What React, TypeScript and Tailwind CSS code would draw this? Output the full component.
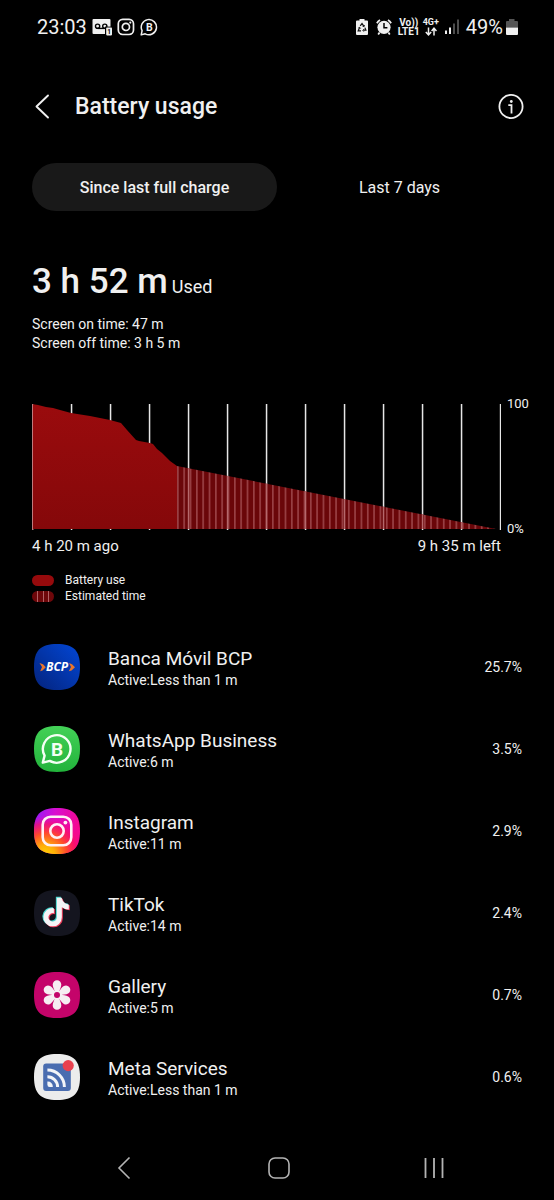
import type { ReactNode } from "react";
import { FaTiktok } from "react-icons/fa";

interface AppUsage {
  name: string;
  active: string;
  percent: string;
  icon: ReactNode;
}

const SQUIRCLE = "M24 1C40.500 1 47 7.500 47 24C47 40.500 40.500 47 24 47C7.500 47 1 40.500 1 24C1 7.500 7.500 1 24 1Z";

// Battery level over time, in chart units (469 x 126)
const USED_AREA =
  "M0 0L6 1L14 3L21 4L28 6L39 9L58 12L78 16L89 19L95 26L104 36L107 37L118 39L121 40L125 45L130 49L138 57L145 62V125H0Z";
const ESTIMATED_AREA = "M145 62L464 125H145Z";

const BcpIcon = () => (
  <svg viewBox="0 0 48 48" className="size-12 shrink-0" aria-hidden="true">
    <defs>
      <linearGradient id="bcp" x1="1" y1="0" x2="0" y2="1">
        <stop offset="0" stopColor="#0247d6" />
        <stop offset="1" stopColor="#04237c" />
      </linearGradient>
    </defs>
    <path d={SQUIRCLE} fill="url(#bcp)" />
    <path d="M6.500 20L10 21.200L12.800 24.200L9.500 27.500L7.200 28.200L9 24Z" fill="#e8762c" />
    <path d="M36 20L39 21.200L42 24.200L38.500 27.500L35.800 28.200L38 24Z" fill="#e8762c" />
    <text x="24" y="28" fontSize="12" fontWeight="700" fontStyle="italic" textAnchor="middle" fill="#fff" fontFamily="'Open Sans', sans-serif">
      BCP
    </text>
  </svg>
);

const WhatsAppIcon = () => (
  <svg viewBox="0 0 48 48" className="size-12 shrink-0" aria-hidden="true">
    <defs>
      <linearGradient id="wa" x1="0" y1="0" x2="0" y2="1">
        <stop offset="0" stopColor="#43d157" />
        <stop offset="1" stopColor="#22b33b" />
      </linearGradient>
    </defs>
    <path d={SQUIRCLE} fill="url(#wa)" />
    <path d="M11.600 30.600A13.800 13.800 0 1 1 16.800 35.900L9.800 37.600Z" fill="none" stroke="#f4fff4" strokeWidth="2.4" strokeLinejoin="round" />
    <text x="24" y="30.6" fontSize="19" fontWeight="700" textAnchor="middle" fill="#f4fff4" fontFamily="Roboto, sans-serif">
      B
    </text>
  </svg>
);

const InstagramIcon = () => (
  <svg viewBox="0 0 48 48" className="size-12 shrink-0" aria-hidden="true">
    <defs>
      <linearGradient id="ig-base" x1="0" y1="0" x2="1" y2="0.3">
        <stop offset="0" stopColor="#8a1cff" />
        <stop offset="0.45" stopColor="#d80fd0" />
        <stop offset="1" stopColor="#f5078f" />
      </linearGradient>
      <radialGradient id="ig-warm" cx="0.25" cy="1.02" r="0.85">
        <stop offset="0" stopColor="#ffd500" />
        <stop offset="0.25" stopColor="#ffae08" />
        <stop offset="0.55" stopColor="#ff4a2c" />
        <stop offset="0.8" stopColor="#fb1060" stopOpacity="0.7" />
        <stop offset="1" stopColor="#f5078f" stopOpacity="0" />
      </radialGradient>
    </defs>
    <path d={SQUIRCLE} fill="url(#ig-base)" />
    <path d={SQUIRCLE} fill="url(#ig-warm)" />
    <rect x="9.7" y="9.7" width="28.6" height="28.6" rx="8" fill="none" stroke="#fff0f4" strokeWidth="2.6" />
    <circle cx="24" cy="24" r="6.7" fill="none" stroke="#fff0f4" strokeWidth="2.6" />
    <circle cx="32.4" cy="15.6" r="1.9" fill="#fff0f4" />
  </svg>
);

const TikTokIcon = () => (
  <svg viewBox="0 0 48 48" className="size-12 shrink-0" aria-hidden="true">
    <path d={SQUIRCLE} fill="#14151f" />
    <FaTiktok x={7.6} y={7.6} size={29} color="#45d6cf" />
    <FaTiktok x={9.6} y={9.4} size={29} color="#ee3f5c" />
    <FaTiktok x={8.6} y={8.5} size={29} color="#f4f4f6" />
  </svg>
);

const GalleryIcon = () => (
  <svg viewBox="0 0 48 48" className="size-12 shrink-0" aria-hidden="true">
    <path d={SQUIRCLE} fill="#c4046a" />
    {[0, 60, 120, 180, 240, 300].map((angle) => (
      <path
        key={angle}
        d="M22 21C21.200 18.500 19.700 16 19.700 13.600A4.300 4.300 0 0 1 28.300 13.600C28.300 16 26.800 18.500 26 21Z"
        fill="#f6eef2"
        transform={`rotate(${angle} 24 24)`}
      />
    ))}
    <circle cx="24" cy="24" r="4.8" fill="#f6eef2" />
    <circle cx="24" cy="24" r="3" fill="#c4046a" />
  </svg>
);

const MetaIcon = () => (
  <svg viewBox="0 0 48 48" className="size-12 shrink-0" aria-hidden="true">
    <path d={SQUIRCLE} fill="#ececec" />
    <rect x="10.2" y="10.4" width="27.6" height="27.6" rx="3" fill="#4a6db0" />
    <g fill="none" stroke="#f2f4f8" strokeWidth="3">
      <path d="M14.400 17A17 17 0 0 1 31.400 34" />
      <path d="M14.400 23.800A10.200 10.200 0 0 1 24.600 34" />
    </g>
    <path d="M14.400 28.600A5 5 0 0 1 19.800 34H16.600A2.200 2.200 0 0 1 14.400 31.800Z" fill="#f2f4f8" />
    <circle cx="35.2" cy="12.6" r="5.6" fill="#e8414f" />
  </svg>
);

const apps: AppUsage[] = [
  { name: "Banca Móvil BCP", active: "Less than 1 m", percent: "25.7%", icon: <BcpIcon /> },
  { name: "WhatsApp Business", active: "6 m", percent: "3.5%", icon: <WhatsAppIcon /> },
  { name: "Instagram", active: "11 m", percent: "2.9%", icon: <InstagramIcon /> },
  { name: "TikTok", active: "14 m", percent: "2.4%", icon: <TikTokIcon /> },
  { name: "Gallery", active: "5 m", percent: "0.7%", icon: <GalleryIcon /> },
  { name: "Meta Services", active: "Less than 1 m", percent: "0.6%", icon: <MetaIcon /> },
];

function StatusBar() {
  return (
    <div className="flex h-[54px] items-center justify-between pl-[37px] pr-9">
      <div className="flex items-center gap-[5px]">
        <span className="text-[20px] leading-6">23:03</span>
        {/* Voicemail */}
        <svg viewBox="0 0 20 18" className="h-[18px] w-5" aria-hidden="true">
          <rect x="0.5" y="1" width="18" height="15" rx="1" fill="#f0f0f0" />
          <g fill="none" stroke="#000" strokeWidth="1.4">
            <circle cx="5.6" cy="8.2" r="2.1" />
            <circle cx="12.8" cy="8.2" r="2.1" />
            <path d="M5.600 10.400H12.800" />
          </g>
          <rect x="13" y="8.6" width="7" height="9.4" fill="#000" />
          <rect x="14.2" y="9.6" width="5.8" height="7.8" rx="0.8" fill="#f0f0f0" />
          <text x="17.1" y="16" fontSize="6.5" fontWeight="700" textAnchor="middle" fill="#000">1</text>
        </svg>
        <svg viewBox="0 0 18 18" className="size-[18px]" aria-hidden="true">
          <rect x="1.3" y="1.3" width="15.2" height="15.2" rx="4.4" fill="none" stroke="#f0f0f0" strokeWidth="1.7" />
          <circle cx="8.9" cy="8.9" r="3.6" fill="none" stroke="#f0f0f0" strokeWidth="1.7" />
          <circle cx="13.3" cy="4.6" r="1.1" fill="#f0f0f0" />
        </svg>
        <svg viewBox="0 0 18 18" className="size-[18px]" aria-hidden="true">
          <path d="M2.100 12.600A7.600 7.600 0 1 1 5.200 15.800L1.200 16.900Z" fill="none" stroke="#f0f0f0" strokeWidth="1.5" strokeLinejoin="round" />
          <text x="9.3" y="12.7" fontSize="10.5" fontWeight="700" textAnchor="middle" fill="#f0f0f0">B</text>
        </svg>
      </div>
      <div className="flex items-center">
        {/* Battery protection */}
        <svg viewBox="0 0 12 18" className="mr-2 h-[18px] w-3" aria-hidden="true">
          <path d="M3.500 1h5v1.600H11a1 1 0 0 1 1 1V16a1 1 0 0 1-1 1H1a1 1 0 0 1-1-1V3.600a1 1 0 0 1 1-1h2.500z" fill="#f0f0f0" />
          <g fill="none" stroke="#111" strokeWidth="1.2">
            <path d="M4.200 7.800L6 5.600L7.800 8.200M8.900 9.600L9.900 12.200H7.200M5 12.800H2.200L3.600 9.600" />
            <path d="M6.600 8.400L8.200 8.600L8.400 7M7.800 11.200L6.800 12.400L7.800 13.600M2.400 9.800L3.700 9.300L4.700 10.600" strokeWidth="0.9" />
          </g>
        </svg>
        <svg viewBox="0 0 16 18" className="mr-1.5 h-[18px] w-4" aria-hidden="true">
          <circle cx="8" cy="9.300" r="6.600" fill="#f0f0f0" />
          <path d="M0.900 5.200A9 9 0 0 1 4 2M15.100 5.200A9 9 0 0 0 12 2M3.600 14.600L2.200 16.600M12.400 14.600L13.800 16.600" fill="none" stroke="#f0f0f0" strokeWidth="1.8" />
          <path d="M8 5V9.800H11.400" fill="none" stroke="#000" strokeWidth="1.500" />
        </svg>
        <span className="mr-[3px] flex flex-col items-center text-[10px] font-bold leading-[9px]">
          <span>Vo))</span>
          <span>LTE1</span>
        </span>
        <span className="mr-1.5 flex flex-col items-center text-[9px] font-bold leading-[9px]">
          <span>4G+</span>
          <svg viewBox="0 0 12 9" className="h-[9px] w-3" aria-hidden="true">
            <path d="M3.500 0.500V7.500M0.800 5L3.500 7.800L6.200 5M9 8.500V1.500M6.600 4L9 1.200L11.500 4" fill="none" stroke="#f0f0f0" strokeWidth="1.500" />
          </svg>
        </span>
        <svg viewBox="0 0 15 16" className="mr-1.5 h-4 w-[15px]" aria-hidden="true">
          <rect x="0" y="11.500" width="2" height="3.500" fill="#f0f0f0" />
          <rect x="4" y="8.500" width="2" height="6.500" fill="#f0f0f0" />
          <rect x="8" y="4.500" width="2" height="10.500" fill="#4d4d4d" />
          <rect x="12" y="0.500" width="2" height="14.500" fill="#4d4d4d" />
        </svg>
        <span className="mr-[3px] text-[20px] leading-6">49%</span>
        <svg viewBox="0 0 12 18" className="h-[18px] w-3" aria-hidden="true">
          <path d="M3 1h5.500v2H11a1 1 0 0 1 1 1V9.500H0V4a1 1 0 0 1 1-1h2z" fill="#555" />
          <path d="M0 9.500H12V16a1 1 0 0 1-1 1H1a1 1 0 0 1-1-1z" fill="#f0f0f0" />
        </svg>
      </div>
    </div>
  );
}

function UsageChart() {
  return (
    <section className="mt-[51px] pl-8 pr-6">
      <div className="flex gap-1.5">
        <div className="min-w-0 flex-1">
          <svg viewBox="0 0 469 126" className="block w-full" role="img" aria-label="Battery level">
            <defs>
              <linearGradient id="used" x1="0" y1="0" x2="0" y2="1">
                <stop offset="0" stopColor="#9a0b0d" />
                <stop offset="1" stopColor="#85080a" />
              </linearGradient>
              <pattern id="stripes" x="145" y="0" width="6.33" height="126" patternUnits="userSpaceOnUse">
                <rect width="6.33" height="126" fill="#6a0609" />
                <rect width="1.7" height="126" fill="#984044" />
              </pattern>
            </defs>
            {Array.from({ length: 13 }, (_, i) => (
              <rect key={i} x={i * 39 - 0.2} y="0" width="1.5" height="126" fill="#e6e6e6" />
            ))}
            <path d={USED_AREA} fill="url(#used)" />
            <path d={ESTIMATED_AREA} fill="url(#stripes)" />
            <rect x="0" y="0" width="1" height="126" fill="#c07a7c" />
            {/* grid lines that show through the estimate */}
            {Array.from({ length: 8 }, (_, i) => {
              const x = 156 + i * 39;
              const top = 62 + ((x - 145) * 63) / 319;
              return <rect key={x} x={x - 0.2} y={top} width="1.5" height={125 - top} fill="#b5686b" />;
            })}
          </svg>
          <div className="mt-1.5 flex justify-between text-[15px] leading-5">
            <span>4 h 20 m ago</span>
            <span>9 h 35 m left</span>
          </div>
        </div>
        <div className="-mt-2 flex h-[141px] w-[23px] flex-col justify-between text-[13px] leading-4">
          <span>100</span>
          <span>0%</span>
        </div>
      </div>
      <ul className="mt-4 text-[12px] leading-4">
        <li className="flex items-center gap-[11px]">
          <span className="h-[11px] w-[22px] rounded-full bg-[#960a0c]" />
          Battery use
        </li>
        <li className="flex items-center gap-[11px]">
          <span className="flex h-[11px] w-[22px] justify-evenly overflow-hidden rounded-full bg-[#6e070a]">
            <span className="w-px bg-[#b06064]" />
            <span className="w-px bg-[#b06064]" />
            <span className="w-px bg-[#b06064]" />
          </span>
          Estimated time
        </li>
      </ul>
    </section>
  );
}

export default function App() {
  return (
    <div className="flex min-h-screen flex-col bg-black font-['Roboto',sans-serif] text-[#f0f0f0]">
      <StatusBar />

      <header className="mt-7 flex h-[50px] items-center justify-between pl-[34px] pr-[30px]">
        <div className="flex items-center gap-[25px]">
          <button type="button" aria-label="Back">
            <svg viewBox="0 0 16 26" className="h-[26px] w-4" fill="none" stroke="#f0f0f0" strokeWidth="1.9" strokeLinecap="round" strokeLinejoin="round">
              <path d="M14 1.500L2.500 12.500L14 23.500" />
            </svg>
          </button>
          <h1 className="text-[23px] font-medium leading-7">Battery usage</h1>
        </div>
        <button type="button" aria-label="Information">
          <svg viewBox="0 0 26 26" className="size-[26px]" fill="none" stroke="#f0f0f0" strokeWidth="1.800">
            <circle cx="13" cy="12.500" r="11.600" />
            <path d="M10.300 11.200H13.500V19.500" strokeWidth="1.800" />
            <circle cx="13.300" cy="7.500" r="1.400" fill="#f0f0f0" stroke="none" />
          </svg>
        </button>
      </header>

      <div className="mt-[31px] flex px-8 text-[16px] leading-5">
        <button type="button" aria-pressed="true" className="h-12 flex-1 rounded-full bg-[#191919] pt-0.5 font-medium">
          Since last full charge
        </button>
        <button type="button" aria-pressed="false" className="h-12 flex-1 rounded-full pt-0.5">
          Last 7 days
        </button>
      </div>

      <section className="mt-[51px] px-8">
        <p className="flex items-baseline gap-1">
          <span className="text-[35px] font-medium leading-10">3 h 52 m</span>
          <span className="text-[18px] leading-5">Used</span>
        </p>
        <p className="mt-[13px] text-[14px] leading-[19px]">Screen on time: 47 m</p>
        <p className="text-[14px] leading-[19px]">Screen off time: 3 h 5 m</p>
      </section>

      <UsageChart />

      <ul className="mt-[22px] pl-[33px] pr-8">
        {apps.map((app) => (
          <li key={app.name}>
            <button type="button" className="flex h-[82px] w-full items-center gap-[27px] text-left">
              {app.icon}
              <span className="flex min-w-0 flex-1 flex-col pt-0.5">
                <span className="text-[19px] leading-6">{app.name}</span>
                <span className="text-[14px] leading-[19px]">Active:{app.active}</span>
              </span>
              <span className="text-[14px] leading-5">{app.percent}</span>
            </button>
          </li>
        ))}
      </ul>

      <nav className="mt-auto flex h-16 items-center pl-[46px] pr-[43px]">
        <button type="button" aria-label="Back" className="flex flex-1 justify-center">
          <svg viewBox="0 0 14 24" className="h-6 w-3.5" fill="none" stroke="#b4b4b4" strokeWidth="1.600">
            <path d="M12.500 1.500L2 12L12.500 22.500" />
          </svg>
        </button>
        <button type="button" aria-label="Home" className="flex flex-1 justify-center">
          <svg viewBox="0 0 24 24" className="size-6" fill="none" stroke="#b4b4b4" strokeWidth="1.600">
            <rect x="2" y="2" width="20" height="20" rx="6" />
          </svg>
        </button>
        <button type="button" aria-label="Recents" className="flex flex-1 justify-center">
          <svg viewBox="0 0 22 24" className="h-6 w-[22px]" fill="none" stroke="#b4b4b4" strokeWidth="1.800">
            <path d="M2.500 2V22M11 2V22M19.500 2V22" />
          </svg>
        </button>
      </nav>
    </div>
  );
}
